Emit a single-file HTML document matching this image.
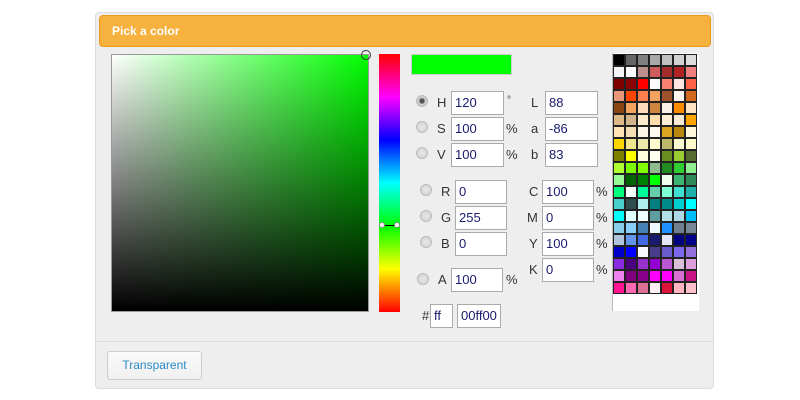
<!DOCTYPE html>
<html><head><meta charset="utf-8">
<style>
*{box-sizing:border-box;margin:0;padding:0}
body{width:800px;height:400px;background:#fff;font-family:"Liberation Sans",sans-serif;position:relative;overflow:hidden}
.a{position:absolute}
.panel{left:95px;top:12px;width:619px;height:377px;background:#eee;border:1px solid #ddd;border-radius:4px}
.head{left:99px;top:15px;width:612px;height:32px;background:#f6b13f;border:1px solid #ec9a1e;border-radius:4px;color:#fff;font-weight:bold;font-size:12px;line-height:30px;padding-left:12px}
.sv{left:111px;top:54px;width:258px;height:258px;border:1px solid #999;background:linear-gradient(to top,#000,rgba(0,0,0,0)),linear-gradient(to right,#fff,#00ff00)}
.hue{left:379px;top:54px;width:21px;height:258px;background:linear-gradient(to bottom,#f00 0%,#f0f 16.67%,#00f 33.33%,#0ff 50%,#0f0 66.67%,#ff0 83.33%,#f00 100%)}
.in{position:absolute;height:24px;background:#fff;border:1px solid #aaa;font-size:13px;line-height:22px;padding-left:3px;color:#1a1a6e}
.lb{position:absolute;font-size:13px;color:#333;line-height:24px}
.rd{position:absolute;width:12px;height:12px;border-radius:50%;background:radial-gradient(circle,#e8e8e8,#cfcfcf);border:1px solid #bbb}
.pal{left:612px;top:53px;width:87px;height:258px;background:#fff;border-left:1px solid #bbb}
.pal div{position:absolute;width:12px;height:12px;border:1px solid #222}
.btn{left:107px;top:351px;width:95px;height:29px;background:linear-gradient(#fafafa,#f0f0f0);border:1px solid #ccc;border-radius:3px;color:#2a8ac4;font-size:12px;line-height:27px;text-align:center}
</style></head><body>
<div class="a panel"></div>
<div class="a head">Pick a color</div>
<div class="a sv"></div>
<div class="a" style="left:361px;top:50px;width:10px;height:10px;border:1px solid #333;border-radius:50%"></div>
<div class="a hue"></div>
<div class="a" style="left:381px;top:225px;width:18px;height:1px;background:#000"></div>
<div class="a" style="left:379px;top:222px;width:6px;height:6px;background:#fff;border:1px solid #888;border-radius:50%"></div>
<div class="a" style="left:394px;top:222px;width:6px;height:6px;background:#fff;border:1px solid #888;border-radius:50%"></div>
<div class="a" style="left:411px;top:54px;width:101px;height:21px;background:#0f0;border:1px solid #ccc"></div>

<div class="rd" style="left:416px;top:95px;background:radial-gradient(circle,#555 30%,#ccc 45%)"></div>
<div class="rd" style="left:416px;top:121px"></div>
<div class="rd" style="left:416px;top:147px"></div>
<div class="lb" style="left:437px;top:91px">H</div>
<div class="lb" style="left:437px;top:117px">S</div>
<div class="lb" style="left:437px;top:143px">V</div>
<div class="in" style="left:451px;top:91px;width:53px">120</div>
<div class="in" style="left:451px;top:117px;width:53px">100</div>
<div class="in" style="left:451px;top:143px;width:53px">100</div>
<div class="lb" style="left:507px;top:89px;font-size:10px">°</div>
<div class="lb" style="left:506px;top:117px">%</div>
<div class="lb" style="left:506px;top:143px">%</div>
<div class="lb" style="left:531px;top:91px">L</div>
<div class="lb" style="left:531px;top:117px">a</div>
<div class="lb" style="left:531px;top:143px">b</div>
<div class="in" style="left:545px;top:91px;width:53px">88</div>
<div class="in" style="left:545px;top:117px;width:53px">-86</div>
<div class="in" style="left:545px;top:143px;width:53px">83</div>

<div class="rd" style="left:420px;top:184px"></div>
<div class="rd" style="left:420px;top:210px"></div>
<div class="rd" style="left:420px;top:236px"></div>
<div class="rd" style="left:417px;top:273px"></div>
<div class="lb" style="left:441px;top:180px">R</div>
<div class="lb" style="left:441px;top:206px">G</div>
<div class="lb" style="left:441px;top:232px">B</div>
<div class="lb" style="left:438px;top:268px">A</div>
<div class="in" style="left:455px;top:180px;width:52px">0</div>
<div class="in" style="left:455px;top:206px;width:52px">255</div>
<div class="in" style="left:455px;top:232px;width:52px">0</div>
<div class="in" style="left:451px;top:268px;width:52px">100</div>
<div class="lb" style="left:506px;top:268px">%</div>
<div class="lb" style="left:529px;top:180px">C</div>
<div class="lb" style="left:527px;top:206px">M</div>
<div class="lb" style="left:529px;top:232px">Y</div>
<div class="lb" style="left:529px;top:258px">K</div>
<div class="in" style="left:542px;top:180px;width:52px">100</div>
<div class="in" style="left:542px;top:206px;width:52px">0</div>
<div class="in" style="left:542px;top:232px;width:52px">100</div>
<div class="in" style="left:542px;top:258px;width:52px">0</div>
<div class="lb" style="left:596px;top:180px">%</div>
<div class="lb" style="left:596px;top:206px">%</div>
<div class="lb" style="left:596px;top:232px">%</div>
<div class="lb" style="left:596px;top:258px">%</div>

<div class="lb" style="left:422px;top:304px">#</div>
<div class="in" style="left:430px;top:304px;width:23px">ff</div>
<div class="in" style="left:457px;top:304px;width:44px">00ff00</div>

<div class="a pal" id="pal"></div>
<div class="a" style="left:96px;top:341px;width:617px;height:1px;background:#ddd"></div>
<div class="a btn">Transparent</div>
<script>
var c="000,666,808080,a9a9a9,c0c0c0,d3d3d3,dcdcdc,f5f5f5,fff,bc8f8f,cd5c5c,a52a2a,b22222,f08080,800000,8b0000,f00,fffafa,fa8072,ffe4e1,ff6347,e9967a,ff4500,ff7f50,f4a460,a0522d,fff5ee,d2691e,8b4513,f4a460,ffdab9,cd853f,faf0e6,ff8c00,ffe4c4,deb887,d2b48c,ffebcd,ffdead,ffefd5,faebd7,ffa500,ffe4b5,f5deb3,fdf5e6,fffaf0,daa520,b8860b,fff8dc,ffd700,f0e68c,eee8aa,fffacd,bdb76b,fafad2,fffacd,808000,ff0,ffffe0,fffff0,6b8e23,9acd32,556b2f,adff2f,7cfc00,7fff00,8fbc8f,228b22,32cd32,90ee90,98fb98,006400,008000,0f0,f0fff0,3cb371,2e8b57,00ff7f,f5fffa,00fa9a,66cdaa,7fffd4,40e0d0,20b2aa,48d1cc,2f4f4f,afeeee,008080,008b8b,00ced1,0ff,0ff,e0ffff,f0ffff,5f9ea0,b0e0e6,add8e6,00bfff,87ceeb,87cefa,4682b4,f0f8ff,1e90ff,708090,778899,b0c4de,6495ed,4169e1,191970,e6e6fa,000080,00008b,0000cd,00f,f8f8ff,483d8b,6a5acd,7b68ee,9370db,8a2be2,4b0082,9932cc,9400d3,ba55d3,d8bfd8,dda0dd,ee82ee,800080,8b008b,f0f,f0f,da70d6,c71585,ff1493,ff69b4,db7093,fff0f5,dc143c,ffb6c1,ffc0cb".split(",");
var p=document.getElementById("pal"),h="";
for(var i=0;i<c.length;i++){var r=Math.floor(i/7),k=i%7;h+='<div style="left:'+(k*12)+'px;top:'+(1+r*12)+'px;background:#'+c[i]+'"></div>';}
p.innerHTML=h;
</script>
</body></html>
